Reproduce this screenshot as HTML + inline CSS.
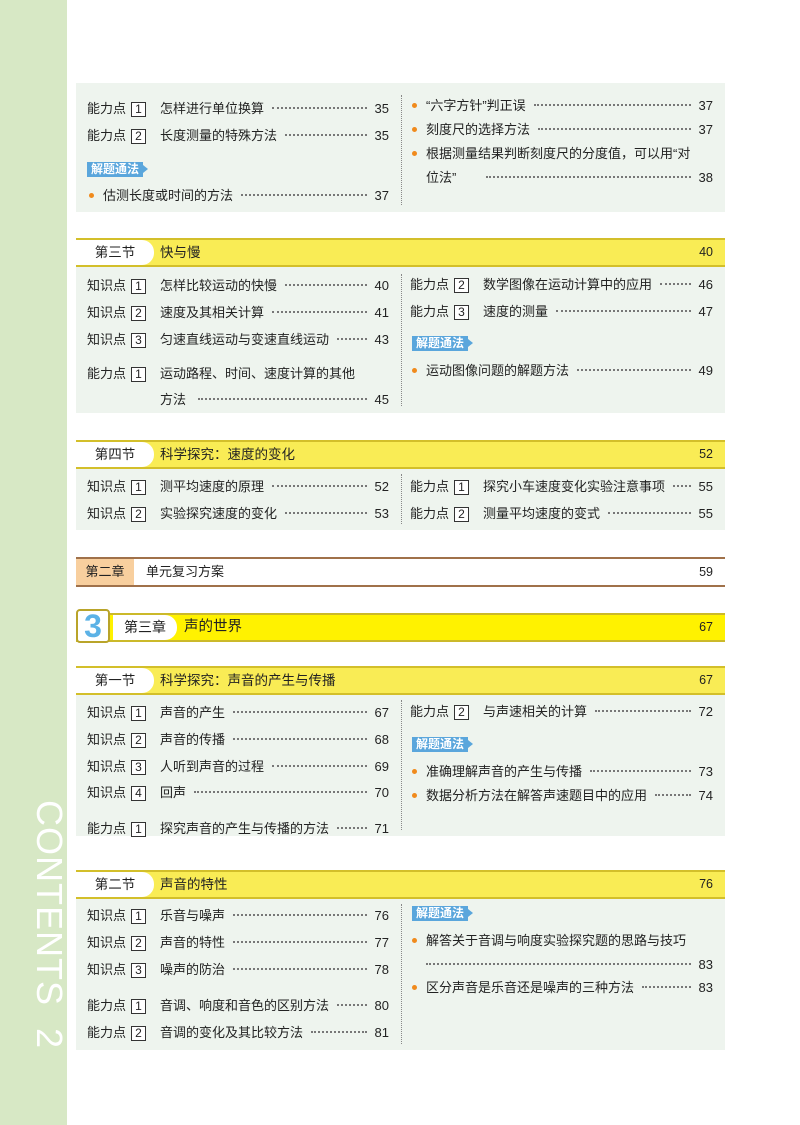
<!DOCTYPE html>
<html><head><meta charset="utf-8"><style>
*{margin:0;padding:0;box-sizing:border-box}
body{width:800px;height:1125px;position:relative;background:#fff;font-family:"Liberation Sans","Noto Sans CJK SC",sans-serif;color:#222;overflow:hidden}
.strip{position:absolute;left:0;top:0;width:67px;height:1125px;background:#d7e8c5}
.cont{position:absolute;left:44px;top:800px;transform-origin:0 0;transform:translate(26px,0) rotate(90deg);color:#fff;font-size:36px;letter-spacing:1px;white-space:nowrap;font-weight:300}
.panel{position:absolute;left:76px;width:649px;background:#eef4ee}
.vd{position:absolute;left:401px;width:0;border-left:1.5px dotted #888}
.r{position:absolute;height:20px;display:flex;align-items:baseline;font-size:13px;white-space:nowrap;line-height:20px;margin-top:2px}
.L{left:87px;width:302px}
.R{left:410px;width:303px}
.lab{width:44px}
.box{display:inline-block;width:15px;height:15px;border:1px solid #333;font-size:12px;line-height:13px;text-align:center;background:#fff}
.t{margin-left:14px}
.d{flex:1;border-bottom:2px dotted #777;margin:0 8px;height:0;position:relative;top:-4px}
.b{width:5px;height:5px;border-radius:50%;background:#f08a1c;margin:0 9px 0 2px;position:relative;top:-2px}
.tag{position:absolute;background:#5aa6dc;color:#fff;font-size:12px;font-weight:bold;padding:0 4px;height:15px;line-height:15px}
.tag:after{content:"";position:absolute;right:-5px;top:3px;border-left:5px solid #5aa6dc;border-top:4.5px solid transparent;border-bottom:4.5px solid transparent}
.hd{position:absolute;left:76px;width:649px;height:29px;background:#f9ec55;border-top:2px solid #d3bf2a;border-bottom:2px solid #d3bf2a;font-size:13.5px}
.hd .w{position:absolute;left:0;top:0;width:78px;height:25px;background:#fff;border-radius:0 12px 12px 0;text-align:center;line-height:25px}
.hd .ti{position:absolute;left:84px;line-height:25px}
.hd .n{position:absolute;right:12px;line-height:25px;font-size:12.5px}
</style></head><body>
<div class="strip"></div>
<div class="cont">CONTENTS&nbsp;&nbsp;2</div>

<!-- block 1 -->
<div class="panel" style="top:83px;height:129px"></div>
<div class="vd" style="top:95px;height:110px"></div>
<div class="r L" style="top:97px"><span class="lab">能力点</span><span class="box">1</span><span class="t">怎样进行单位换算</span><span class="d"></span><span>35</span></div>
<div class="r L" style="top:124px"><span class="lab">能力点</span><span class="box">2</span><span class="t">长度测量的特殊方法</span><span class="d"></span><span>35</span></div>
<div class="tag" style="left:87px;top:162px">解题通法</div>
<div class="r L" style="top:184px"><span class="b"></span><span>估测长度或时间的方法</span><span class="d"></span><span>37</span></div>
<div class="r R" style="top:94px"><span class="b"></span><span>“六字方针”判正误</span><span class="d"></span><span>37</span></div>
<div class="r R" style="top:118px"><span class="b"></span><span>刻度尺的选择方法</span><span class="d"></span><span>37</span></div>
<div class="r R" style="top:142px"><span class="b"></span><span>根据测量结果判断刻度尺的分度值，可以用“对</span></div>
<div class="r R" style="top:166px;left:426px;width:287px"><span>位法”</span><span class="d" style="margin-left:30px"></span><span>38</span></div>

<!-- block 2 -->
<div class="hd" style="top:238px"><div class="w">第三节</div><div class="ti">快与慢</div><div class="n">40</div></div>
<div class="panel" style="top:267px;height:146px"></div>
<div class="vd" style="top:274px;height:132px"></div>
<div class="r L" style="top:274px"><span class="lab">知识点</span><span class="box">1</span><span class="t">怎样比较运动的快慢</span><span class="d"></span><span>40</span></div>
<div class="r L" style="top:301px"><span class="lab">知识点</span><span class="box">2</span><span class="t">速度及其相关计算</span><span class="d"></span><span>41</span></div>
<div class="r L" style="top:328px"><span class="lab">知识点</span><span class="box">3</span><span class="t">匀速直线运动与变速直线运动</span><span class="d"></span><span>43</span></div>
<div class="r L" style="top:362px"><span class="lab">能力点</span><span class="box">1</span><span class="t">运动路程、时间、速度计算的其他</span></div>
<div class="r L" style="top:388px;left:160px;width:229px"><span>方法</span><span class="d" style="margin-left:12px"></span><span>45</span></div>
<div class="r R" style="top:273px"><span class="lab">能力点</span><span class="box">2</span><span class="t">数学图像在运动计算中的应用</span><span class="d"></span><span>46</span></div>
<div class="r R" style="top:300px"><span class="lab">能力点</span><span class="box">3</span><span class="t">速度的测量</span><span class="d"></span><span>47</span></div>
<div class="tag" style="left:412px;top:336px">解题通法</div>
<div class="r R" style="top:359px"><span class="b"></span><span>运动图像问题的解题方法</span><span class="d"></span><span>49</span></div>

<!-- block 3 -->
<div class="hd" style="top:440px"><div class="w">第四节</div><div class="ti">科学探究：速度的变化</div><div class="n">52</div></div>
<div class="panel" style="top:469px;height:61px"></div>
<div class="vd" style="top:474px;height:50px"></div>
<div class="r L" style="top:475px"><span class="lab">知识点</span><span class="box">1</span><span class="t">测平均速度的原理</span><span class="d"></span><span>52</span></div>
<div class="r L" style="top:502px"><span class="lab">知识点</span><span class="box">2</span><span class="t">实验探究速度的变化</span><span class="d"></span><span>53</span></div>
<div class="r R" style="top:475px"><span class="lab">能力点</span><span class="box">1</span><span class="t">探究小车速度变化实验注意事项</span><span class="d"></span><span>55</span></div>
<div class="r R" style="top:502px"><span class="lab">能力点</span><span class="box">2</span><span class="t">测量平均速度的变式</span><span class="d"></span><span>55</span></div>

<!-- chapter 2 -->
<div style="position:absolute;left:76px;top:557px;width:649px;height:30px;border-top:2px solid #a0714a;border-bottom:2px solid #a0714a;font-size:13px">
<div style="position:absolute;left:0;top:0;width:58px;height:26px;background:#f8cf9e;text-align:center;line-height:26px">第二章</div>
<div style="position:absolute;left:70px;line-height:26px">单元复习方案</div>
<div style="position:absolute;right:12px;line-height:26px;font-size:12.5px">59</div></div>

<!-- chapter 3 -->
<div style="position:absolute;left:76px;top:613px;width:649px;height:29px;background:#fff200;border-top:2px solid #cbb92a;border-bottom:2px solid #cbb92a;font-size:14px">
<div style="position:absolute;left:37px;top:0;width:64px;height:25px;background:#fff;border-radius:0 12px 12px 0;text-align:center;line-height:25px">第三章</div>
<div style="position:absolute;left:108px;line-height:25px;font-size:14.5px">声的世界</div>
<div style="position:absolute;right:12px;line-height:25px;font-size:12.5px">67</div></div>
<div style="position:absolute;left:76px;top:609px;width:34px;height:34px;background:#fff;border:2px solid #b9a42a;border-radius:4px;color:#5cb2e6;font-weight:bold;font-size:32px;line-height:30px;text-align:center;font-family:'Liberation Sans',sans-serif">3</div>

<!-- block 4 -->
<div class="hd" style="top:666px"><div class="w">第一节</div><div class="ti">科学探究：声音的产生与传播</div><div class="n">67</div></div>
<div class="panel" style="top:695px;height:141px"></div>
<div class="vd" style="top:700px;height:130px"></div>
<div class="r L" style="top:701px"><span class="lab">知识点</span><span class="box">1</span><span class="t">声音的产生</span><span class="d"></span><span>67</span></div>
<div class="r L" style="top:728px"><span class="lab">知识点</span><span class="box">2</span><span class="t">声音的传播</span><span class="d"></span><span>68</span></div>
<div class="r L" style="top:755px"><span class="lab">知识点</span><span class="box">3</span><span class="t">人听到声音的过程</span><span class="d"></span><span>69</span></div>
<div class="r L" style="top:781px"><span class="lab">知识点</span><span class="box">4</span><span class="t">回声</span><span class="d"></span><span>70</span></div>
<div class="r L" style="top:817px"><span class="lab">能力点</span><span class="box">1</span><span class="t">探究声音的产生与传播的方法</span><span class="d"></span><span>71</span></div>
<div class="r R" style="top:700px"><span class="lab">能力点</span><span class="box">2</span><span class="t">与声速相关的计算</span><span class="d"></span><span>72</span></div>
<div class="tag" style="left:412px;top:737px">解题通法</div>
<div class="r R" style="top:760px"><span class="b"></span><span>准确理解声音的产生与传播</span><span class="d"></span><span>73</span></div>
<div class="r R" style="top:784px"><span class="b"></span><span>数据分析方法在解答声速题目中的应用</span><span class="d"></span><span>74</span></div>

<!-- block 5 -->
<div class="hd" style="top:870px"><div class="w">第二节</div><div class="ti">声音的特性</div><div class="n">76</div></div>
<div class="panel" style="top:899px;height:151px"></div>
<div class="vd" style="top:904px;height:140px"></div>
<div class="r L" style="top:904px"><span class="lab">知识点</span><span class="box">1</span><span class="t">乐音与噪声</span><span class="d"></span><span>76</span></div>
<div class="r L" style="top:931px"><span class="lab">知识点</span><span class="box">2</span><span class="t">声音的特性</span><span class="d"></span><span>77</span></div>
<div class="r L" style="top:958px"><span class="lab">知识点</span><span class="box">3</span><span class="t">噪声的防治</span><span class="d"></span><span>78</span></div>
<div class="r L" style="top:994px"><span class="lab">能力点</span><span class="box">1</span><span class="t">音调、响度和音色的区别方法</span><span class="d"></span><span>80</span></div>
<div class="r L" style="top:1021px"><span class="lab">能力点</span><span class="box">2</span><span class="t">音调的变化及其比较方法</span><span class="d"></span><span>81</span></div>
<div class="tag" style="left:412px;top:906px">解题通法</div>
<div class="r R" style="top:929px"><span class="b"></span><span>解答关于音调与响度实验探究题的思路与技巧</span></div>
<div class="r R" style="top:953px;left:426px;width:287px"><span class="d" style="margin-left:0"></span><span>83</span></div>
<div class="r R" style="top:976px"><span class="b"></span><span>区分声音是乐音还是噪声的三种方法</span><span class="d"></span><span>83</span></div>
</body></html>
